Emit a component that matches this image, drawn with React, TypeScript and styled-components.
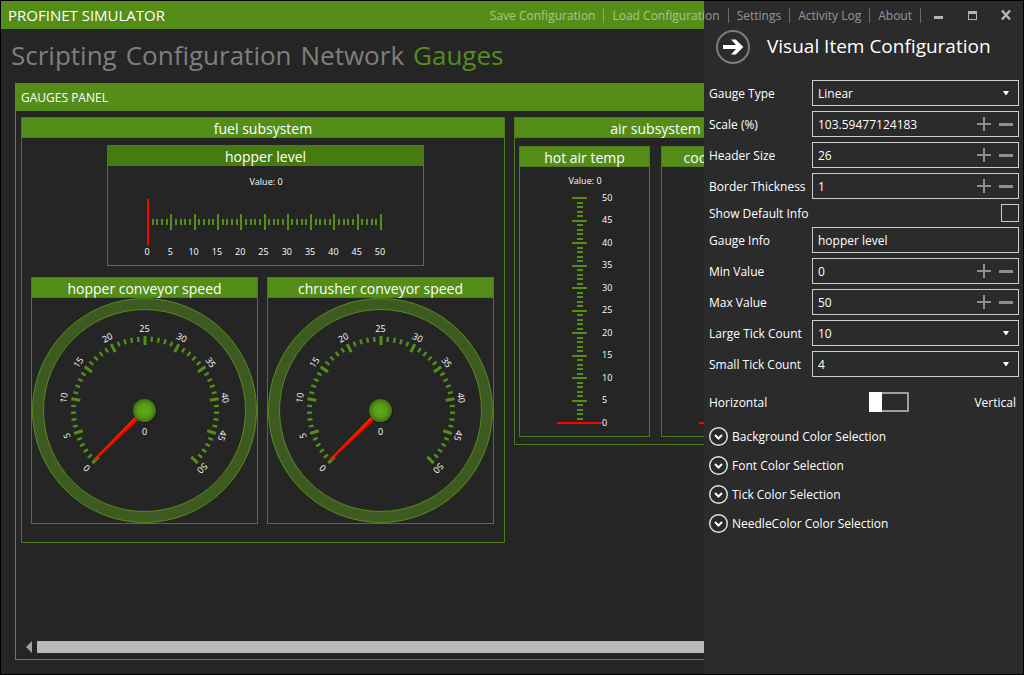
import React, { useState } from "react";
import styled, { createGlobalStyle } from "styled-components";

const green = "#548e19";
const greenDark = "#467b12";
const greenLine = "#4a7a1c";
const font = `"Open Sans", "Noto Sans", sans-serif`;

const GlobalStyle = createGlobalStyle`
  *, *::before, *::after { box-sizing: border-box; }
  body { margin: 0; background: #252525; font-family: ${font}; font-size: 12px; color: #fff; }
  button, input, select { font: inherit; color: inherit; margin: 0; border-radius: 0; }
  button { background: none; border: 0; padding: 0; cursor: pointer; }
`;

const Window = styled.div`
  position: relative;
  display: flex;
  flex-direction: column;
  min-height: 100vh;
  border: 1px solid #000;
  background: #252525;
  overflow: hidden;
`;

/* ---------- title bar ---------- */

const TitleBar = styled.header`
  display: flex;
  align-items: center;
  justify-content: space-between;
  height: 28px;
  padding-left: 7px;
  background: ${green};
`;

const AppTitle = styled.h1`
  margin: 0;
  font-size: 15px;
  font-weight: 400;
  line-height: 28px;
  white-space: nowrap;
`;

const Commands = styled.nav`
  position: relative;
  z-index: 2;
  display: flex;
  align-items: center;
`;

const Command = styled.button`
  height: 15px;
  padding: 0 8px;
  border-right: 1px solid rgba(255, 255, 255, 0.3);
  color: rgba(255, 255, 255, 0.5);
  line-height: 15px;
  white-space: nowrap;
`;

const WindowButton = styled.button`
  display: grid;
  place-items: center;
  width: 34px;
  height: 28px;
  color: #b4b4b4;
`;

/* ---------- tabs ---------- */

const Tabs = styled.nav`
  display: flex;
  align-items: flex-start;
  gap: 9px;
  height: 54px;
  padding: 0 10px;
`;

const Tab = styled.button<{ $active?: boolean }>`
  color: ${(p) => (p.$active ? green : "#7f7f7f")};
  font-size: 26px;
  line-height: 52px;
`;

/* ---------- gauges panel ---------- */

const Panel = styled.main`
  display: flex;
  flex: 1;
  flex-direction: column;
  margin: 0 14px;
  margin-bottom: 14px;
  border: 1px solid #5c8a2a;
  border-top: 0;
`;

const PanelHeader = styled.h2`
  margin: 0;
  padding: 2px 0 0 5px;
  background: ${green};
  font-size: 12px;
  font-weight: 400;
  line-height: 26px;
`;

const Canvas = styled.div`
  display: flex;
  flex: 1;
  align-items: flex-start;
  gap: 9px;
  padding: 6px 5px;
  overflow: hidden;
`;

const Scrollbar = styled.div`
  display: flex;
  align-items: center;
  gap: 5px;
  height: 12px;
  margin: 0 10px 6px;
`;

const ScrollArrow = styled.button`
  display: flex;
  width: 6px;
  height: 12px;
`;

const ScrollThumb = styled.div`
  flex: 1;
  height: 12px;
  background: #b9b9b9;
`;

const Group = styled.section<{ $width: number }>`
  flex: none;
  width: ${(p) => p.$width}px;
  border: 1px solid ${greenLine};
  border-top: 0;
`;

const BoxHeader = styled.h3<{ $dark?: boolean }>`
  margin: 0 -1px;
  height: 21px;
  border: 1px solid ${greenLine};
  background: ${(p) => (p.$dark ? greenDark : green)};
  font-size: 14px;
  font-weight: 400;
  line-height: 21px;
  text-align: center;
  white-space: nowrap;
`;

const FuelBody = styled.div`
  display: flex;
  flex-direction: column;
  gap: 11px;
  padding: 7px 9px 18px;
`;

const GaugeRow = styled.div<{ $indent?: number }>`
  display: flex;
  gap: 9px;
  padding-left: ${(p) => p.$indent ?? 0}px;
`;

const AirBody = styled.div`
  display: flex;
  gap: 11px;
  padding: 8px 4px 7px;
`;

const Gauge = styled.article<{ $width: number }>`
  flex: none;
  width: ${(p) => p.$width}px;
  border: 1px solid ${greenLine};
  border-top: 0;
`;

const Drawing = styled.svg`
  display: block;
  font-family: ${font};
  font-size: 9px;
  font-weight: 500;
  fill: #fff;
`;

/* ---------- configuration flyout ---------- */

const Flyout = styled.aside`
  position: absolute;
  z-index: 1;
  top: 0;
  right: 0;
  bottom: 0;
  width: 319px;
  padding: 28px 4px 0 5px;
  background: #2b2b2b;
`;

const FlyoutHeader = styled.header`
  display: flex;
  align-items: center;
  gap: 17px;
  height: 36px;
  margin-bottom: 15px;
  padding-left: 7px;
`;

const BackButton = styled.button`
  display: flex;
`;

const FlyoutTitle = styled.h2`
  margin: 0;
  padding-bottom: 2px;
  font-size: 19px;
  font-weight: 400;
  line-height: 24px;
  white-space: nowrap;
`;

const Form = styled.form`
  display: flex;
  flex-direction: column;
  gap: 5px;
`;

const Row = styled.div`
  display: grid;
  grid-template-columns: 103px minmax(0, 1fr);
  align-items: center;
`;

const Label = styled.label`
  padding-top: 2px;
  line-height: 16px;
  white-space: nowrap;
`;

const Field = styled.div`
  display: flex;
  align-items: center;
  height: 26px;
  padding-right: 1px;
  border: 1px solid #ccc;
`;

const TextInput = styled.input`
  flex: 1;
  min-width: 0;
  height: 24px;
  padding: 0 5px;
  border: 0;
  outline: 0;
  background: transparent;
`;

const StepButton = styled.button`
  display: grid;
  flex: none;
  place-items: center;
  width: 22px;
  height: 24px;
`;

const SelectInput = styled.select`
  grid-area: 1 / 1;
  width: 100%;
  height: 26px;
  padding: 0 5px;
  border: 1px solid #ccc;
  outline: 0;
  background: transparent;
  appearance: none;
  option { background: #2b2b2b; }
`;

const SelectBox = styled.div`
  display: grid;
  align-items: center;
`;

const SelectArrow = styled.svg`
  grid-area: 1 / 1;
  justify-self: end;
  margin-right: 10px;
  pointer-events: none;
`;

const CheckBox = styled.input`
  justify-self: end;
  width: 18px;
  height: 18px;
  border: 1px solid #ccc;
  appearance: none;
  &:checked { background: #ccc; box-shadow: inset 0 0 0 3px #2b2b2b; }
`;

const SwitchRow = styled.div`
  display: grid;
  grid-template-columns: 160px 40px 1fr;
  align-items: center;
  height: 20px;
  margin: 10px 3px 10px 0;
`;

const SwitchText = styled.span<{ $end?: boolean }>`
  text-align: ${(p) => (p.$end ? "right" : "left")};
`;

const Switch = styled.input`
  display: flex;
  width: 40px;
  height: 20px;
  border: 2px solid #a39e93;
  appearance: none;
  &::before {
    content: "";
    width: 13px;
    height: 20px;
    margin: -2px;
    background: #fff;
  }
  &:checked { justify-content: flex-end; }
`;

const Expanders = styled.div`
  display: flex;
  flex-direction: column;
  align-items: flex-start;
  gap: 10px;
`;

const Expander = styled.button`
  display: flex;
  align-items: center;
  gap: 4px;
  height: 19px;
  line-height: 19px;
  white-space: nowrap;
`;

/* ---------- gauge drawings ---------- */

const labels = Array.from({ length: 11 }, (_, i) => i * 5);
const ticks = Array.from({ length: 51 }, (_, i) => i);

function RadialGauge({ title, id }: { title: string; id: string }) {
  return (
    <Gauge $width={227}>
      <BoxHeader>{title}</BoxHeader>
      <Drawing width="225" height="225" viewBox="-112.5 -112.5 225 225" role="img" aria-label={title}>
        <defs>
          <radialGradient id={id}>
            <stop offset="0" stopColor="#62ad18" />
            <stop offset="0.6" stopColor="#569a17" />
            <stop offset="1" stopColor="#3f6e14" />
          </radialGradient>
        </defs>
        <circle r="106.5" fill="none" stroke="#3d5b20" strokeWidth="11" />
        <circle r="112" fill="none" stroke={green} />
        <circle r="101" fill="none" stroke={green} />
        {ticks.map((t) => {
          const major = t % 5 === 0;
          return (
            <rect
              key={t}
              x={major ? -1.5 : -1.2}
              y={major ? -74.5 : -74}
              width={major ? 3 : 2.4}
              height={major ? 9 : 5}
              fill={green}
              transform={`translate(0.5 0) rotate(${-135 + t * 5.4})`}
            />
          );
        })}
        {labels.map((v) => (
          <text key={v} y="-78.5" textAnchor="middle" transform={`rotate(${-135 + v * 5.4})`}>
            {v}
          </text>
        ))}
        <g transform="rotate(-134.5)">
          <path d="M-2.6 0 L-1.2 -70.5 L0.2 -70.5 L0.6 0 Z" fill="#f00" />
          <path d="M2.2 0 L0.8 -70.5 L0.2 -70.5 L0.6 0 Z" fill="#ff4000" />
        </g>
        <circle cx="1" cy="1" r="12" fill="#000" opacity="0.25" />
        <circle r="11.5" fill={`url(#${id})`} />
        <text y="24" textAnchor="middle">0</text>
      </Drawing>
    </Gauge>
  );
}

function HorizontalGauge({ title }: { title: string }) {
  return (
    <Gauge $width={317}>
      <BoxHeader $dark>{title}</BoxHeader>
      <Drawing width="315" height="99" viewBox="0 0 315 99" role="img" aria-label={title}>
        <text x="158" y="19" textAnchor="middle">Value: 0</text>
        {ticks.map((t) => {
          const major = t % 5 === 0;
          return (
            <rect
              key={t}
              x={Math.round(39 + t * 4.66)}
              y={major ? 48 : 53}
              width="2"
              height={major ? 16 : 6}
              fill={green}
            />
          );
        })}
        {labels.map((v) => (
          <text key={v} x={39 + v * 4.66} y="89" textAnchor="middle">{v}</text>
        ))}
        <rect x="39" y="33" width="2" height="46" fill="#f00" />
      </Drawing>
    </Gauge>
  );
}

function VerticalGauge({ title, showText = true }: { title: string; showText?: boolean }) {
  return (
    <Gauge $width={131}>
      <BoxHeader>{title}</BoxHeader>
      <Drawing width="129" height="269" viewBox="0 0 129 269" role="img" aria-label={title}>
        {showText && <text x="65" y="17" textAnchor="middle">Value: 0</text>}
        {ticks.map((t) => {
          const major = t % 5 === 0;
          return (
            <rect
              key={t}
              x={major ? 52 : 57}
              y={Math.round(255.4 - t * 4.5)}
              width={major ? 15 : 6}
              height="2"
              fill={green}
            />
          );
        })}
        {showText && labels.map((v) => (
          <text key={v} x="82" y={258.5 - v * 4.5}>{v}</text>
        ))}
        <rect x="37" y="255" width="45" height="2" fill="#f00" />
      </Drawing>
    </Gauge>
  );
}

/* ---------- form parts ---------- */

function NumberRow({ id, label, initial }: { id: string; label: string; initial: string }) {
  const [value, setValue] = useState(initial);
  const step = (d: number) => setValue(String(Number(value) + d));
  return (
    <Row>
      <Label htmlFor={id}>{label}</Label>
      <Field>
        <TextInput id={id} inputMode="decimal" value={value} onChange={(e) => setValue(e.target.value)} />
        <StepButton type="button" aria-label={`Increase ${label}`} onClick={() => step(1)}>
          <svg width="14" height="14" viewBox="0 0 14 14">
            <path d="M0 7H14M7 0V14" stroke="#8f8f8f" strokeWidth="2" />
          </svg>
        </StepButton>
        <StepButton type="button" aria-label={`Decrease ${label}`} onClick={() => step(-1)}>
          <svg width="14" height="3" viewBox="0 0 14 3">
            <rect width="14" height="3" fill="#8f8f8f" />
          </svg>
        </StepButton>
      </Field>
    </Row>
  );
}

function SelectRow({ id, label, options }: { id: string; label: string; options: string[] }) {
  return (
    <Row>
      <Label htmlFor={id}>{label}</Label>
      <SelectBox>
        <SelectInput id={id} defaultValue={options[0]}>
          {options.map((o) => (
            <option key={o}>{o}</option>
          ))}
        </SelectInput>
        <SelectArrow width="6" height="4" viewBox="0 0 6 4">
          <path d="M0 0H6L3.5 4H2.5Z" fill="#fff" />
        </SelectArrow>
      </SelectBox>
    </Row>
  );
}

const commands = ["Save Configuration", "Load Configuration", "Settings", "Activity Log", "About"];
const tabs = ["Scripting", "Configuration", "Network", "Gauges"];
const sections = ["Background Color", "Font Color", "Tick Color", "NeedleColor Color"];

export default function App() {
  return (
    <Window>
      <GlobalStyle />
      <TitleBar>
        <AppTitle>PROFINET SIMULATOR</AppTitle>
        <Commands>
          {commands.map((c) => (
            <Command key={c}>{c}</Command>
          ))}
          <WindowButton aria-label="Minimize">
            <svg width="10" height="10" viewBox="0 0 10 10">
              <rect y="6" x="1" width="9" height="3" fill="currentColor" />
            </svg>
          </WindowButton>
          <WindowButton aria-label="Maximize">
            <svg width="9" height="9" viewBox="0 0 9 9">
              <path d="M0 0H9V9H0ZM1 3V8H8V3Z" fill="currentColor" fillRule="evenodd" />
            </svg>
          </WindowButton>
          <WindowButton aria-label="Close">
            <svg width="10" height="10" viewBox="0 0 10 10">
              <path d="M1 0.5L9 9.5M9 0.5L1 9.5" stroke="currentColor" strokeWidth="2.4" />
            </svg>
          </WindowButton>
        </Commands>
      </TitleBar>

      <Tabs>
        {tabs.map((t) => (
          <Tab key={t} $active={t === "Gauges"}>{t}</Tab>
        ))}
      </Tabs>

      <Panel>
        <PanelHeader>GAUGES PANEL</PanelHeader>
        <Canvas>
          <Group $width={484}>
            <BoxHeader>fuel subsystem</BoxHeader>
            <FuelBody>
              <GaugeRow $indent={76}>
                <HorizontalGauge title="hopper level" />
              </GaugeRow>
              <GaugeRow>
                <RadialGauge title="hopper conveyor speed" id="hub-hopper" />
                <RadialGauge title="chrusher conveyor speed" id="hub-chrusher" />
              </GaugeRow>
            </FuelBody>
          </Group>
          <Group $width={283}>
            <BoxHeader>air subsystem</BoxHeader>
            <AirBody>
              <VerticalGauge title="hot air temp" />
              <VerticalGauge title="cool air temp" showText={false} />
            </AirBody>
          </Group>
        </Canvas>
        <Scrollbar>
          <ScrollArrow aria-label="Scroll left">
            <svg width="6" height="12" viewBox="0 0 6 12">
              <path d="M6 0V12L0 6Z" fill="#a0a0a0" />
            </svg>
          </ScrollArrow>
          <ScrollThumb />
        </Scrollbar>
      </Panel>

      <Flyout>
        <FlyoutHeader>
          <BackButton aria-label="Close configuration">
            <svg width="34" height="34" viewBox="0 0 34 34">
              <circle cx="17" cy="17" r="16" fill="none" stroke="#7d7d7d" strokeWidth="2" />
              <path d="M7 15H20L15 9.5H19.8L27.3 17L19.8 24.5H15L20 19H7Z" fill="#fff" />
            </svg>
          </BackButton>
          <FlyoutTitle>Visual Item Configuration</FlyoutTitle>
        </FlyoutHeader>
        <Form>
          <SelectRow id="type" label="Gauge Type" options={["Linear", "Radial"]} />
          <NumberRow id="scale" label="Scale (%)" initial="103.59477124183" />
          <NumberRow id="header" label="Header Size" initial="26" />
          <NumberRow id="border" label="Border Thickness" initial="1" />
          <Row>
            <Label htmlFor="default-info">Show Default Info</Label>
            <CheckBox id="default-info" type="checkbox" />
          </Row>
          <Row>
            <Label htmlFor="info">Gauge Info</Label>
            <Field>
              <TextInput id="info" defaultValue="hopper level" />
            </Field>
          </Row>
          <NumberRow id="min" label="Min Value" initial="0" />
          <NumberRow id="max" label="Max Value" initial="50" />
          <SelectRow id="large" label="Large Tick Count" options={["10", "5"]} />
          <SelectRow id="small" label="Small Tick Count" options={["4", "2"]} />
          <SwitchRow>
            <SwitchText>Horizontal</SwitchText>
            <Switch type="checkbox" role="switch" aria-label="Vertical orientation" />
            <SwitchText $end>Vertical</SwitchText>
          </SwitchRow>
          <Expanders>
            {sections.map((s) => (
              <Expander key={s} type="button" aria-expanded={false}>
                <svg width="19" height="19" viewBox="0 0 19 19">
                  <circle cx="9.5" cy="9.5" r="8.8" fill="none" stroke="#e6e6e6" strokeWidth="1.4" />
                  <path d="M6 8L9.5 11.5L13 8" fill="none" stroke="#fff" strokeWidth="2" />
                </svg>
                {s} Selection
              </Expander>
            ))}
          </Expanders>
        </Form>
      </Flyout>
    </Window>
  );
}
